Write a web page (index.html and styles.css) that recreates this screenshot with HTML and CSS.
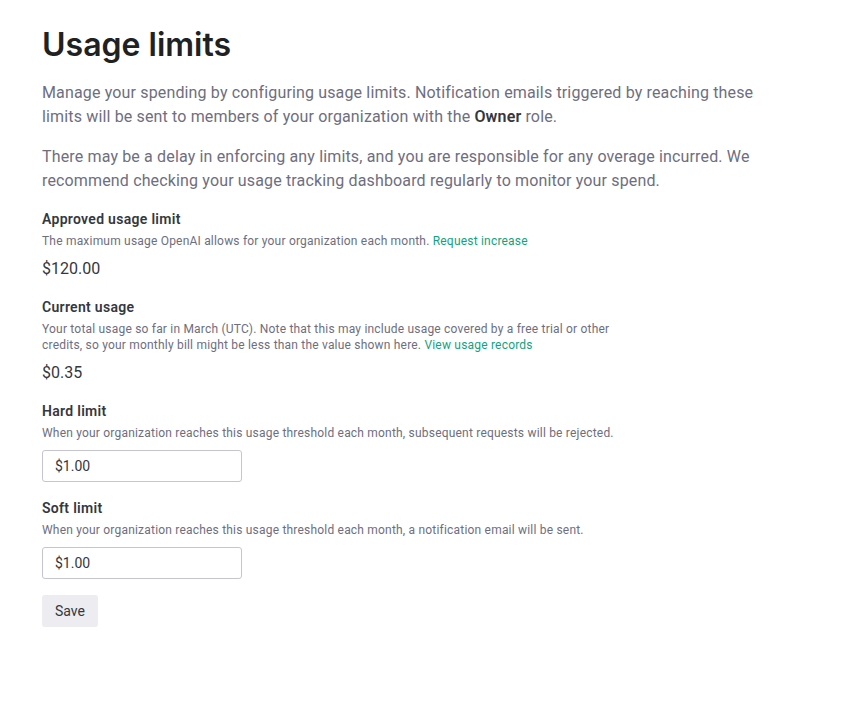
FILE: index.html
```html
<!DOCTYPE html>
<html lang="en">
<head>
    <meta charset="UTF-8">
    <title>Usage limits</title>
    <link rel="stylesheet" href="styles.css">
</head>
<body>
    <div class="page">
        <h1 class="title">Usage limits</h1>
        <p class="intro">Manage your spending by configuring usage limits. Notification emails triggered by reaching these limits will be sent to members of your organization with the <b>Owner</b> role.</p>
        <p class="intro">There may be a delay in enforcing any limits, and you are responsible for any overage incurred. We recommend checking your usage tracking dashboard regularly to monitor your spend.</p>

        <div class="section">
            <div class="label">Approved usage limit</div>
            <div class="desc">The maximum usage OpenAI allows for your organization each month. <a href="#" class="link">Request increase</a></div>
            <div class="value">$120.00</div>
        </div>

        <div class="section">
            <div class="label">Current usage</div>
            <div class="desc">Your total usage so far in March (UTC). Note that this may include usage covered by a free trial or other credits, so your monthly bill might be less than the value shown here. <a href="#" class="link">View usage records</a></div>
            <div class="value">$0.35</div>
        </div>

        <div class="section">
            <div class="label">Hard limit</div>
            <div class="desc">When your organization reaches this usage threshold each month, subsequent requests will be rejected.</div>
            <input class="field" type="text" value="$1.00">
        </div>

        <div class="section">
            <div class="label">Soft limit</div>
            <div class="desc">When your organization reaches this usage threshold each month, a notification email will be sent.</div>
            <input class="field" type="text" value="$1.00">
        </div>

        <button class="save">Save</button>
    </div>
</body>
</html>
```

FILE: styles.css
```css
body {
    margin: 0;
    padding: 0;
    background-color: #ffffff;
    font-family: Roboto, "Noto Sans", Arial, sans-serif;
    color: #353740;
}

.page {
    padding: 25px 42px;
    max-width: 745px;
}

.title {
    margin: 0 0 16px 0;
    font-family: Inter, Roboto, sans-serif;
    font-size: 32px;
    line-height: 40px;
    font-weight: 600;
    color: #202123;
}

.intro {
    margin: 0 0 16px 0;
    font-size: 16px;
    line-height: 24px;
    letter-spacing: 0.15px;
    color: #6e6e80;
}

.intro b {
    font-weight: 600;
    color: #353740;
}

.section {
    margin-bottom: 16px;
}

.label {
    font-size: 14px;
    line-height: 20px;
    font-weight: 600;
    letter-spacing: 0.3px;
    color: #353740;
}

.desc {
    margin-top: 4px;
    max-width: 585px;
    font-size: 12px;
    line-height: 16px;
    letter-spacing: 0.2px;
    color: #6e6e80;
}

.link {
    color: #10a37f;
    text-decoration: none;
}

.value {
    margin-top: 8px;
    font-size: 16px;
    line-height: 24px;
    color: #353740;
}

.field {
    display: block;
    box-sizing: border-box;
    margin-top: 9px;
    width: 200px;
    height: 32px;
    padding: 0 12px;
    border: 1px solid #c5c5d2;
    border-radius: 3px;
    font-family: inherit;
    font-size: 14px;
    color: #353740;
    outline: none;
}

.save {
    height: 32px;
    padding: 0 13px;
    border: none;
    border-radius: 3px;
    background-color: #ececf1;
    font-family: inherit;
    font-size: 14px;
    color: #353740;
    cursor: pointer;
}
```
